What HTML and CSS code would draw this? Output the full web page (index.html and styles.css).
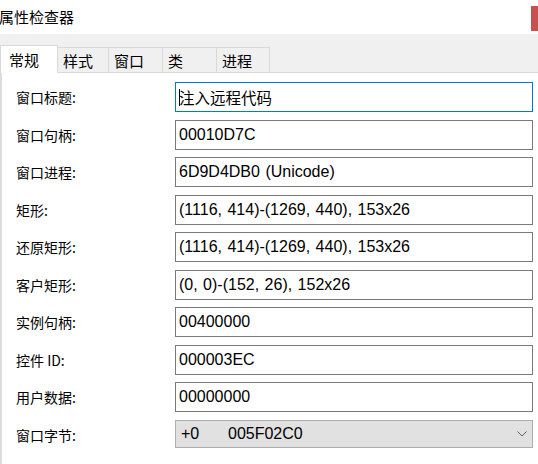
FILE: index.html
```html
<!DOCTYPE html>
<html lang="zh-CN">
<head>
<meta charset="utf-8">
<title>属性检查器</title>
<link rel="stylesheet" href="styles.css">
</head>
<body>
<div class="window">
  <div class="titlebar">
    <span class="title">属性检查器</span>
    <span class="close"></span>
  </div>
  <div class="tabstrip">
    <div class="tab active">常规</div>
    <div class="tab w52">样式</div>
    <div class="tab w55">窗口</div>
    <div class="tab w55">类</div>
    <div class="tab w54">进程</div>
  </div>
  <div class="panel">
    <div class="form">
      <div class="label">窗口标题:</div>
      <div class="field focus"><span class="caret"></span>注入远程代码</div>
      <div class="label">窗口句柄:</div>
      <div class="field">00010D7C</div>
      <div class="label">窗口进程:</div>
      <div class="field">6D9D4DB0 (Unicode)</div>
      <div class="label">矩形:</div>
      <div class="field">(1116, 414)-(1269, 440), 153x26</div>
      <div class="label">还原矩形:</div>
      <div class="field">(1116, 414)-(1269, 440), 153x26</div>
      <div class="label">客户矩形:</div>
      <div class="field">(0, 0)-(152, 26), 152x26</div>
      <div class="label">实例句柄:</div>
      <div class="field">00400000</div>
      <div class="label">控件 ID:</div>
      <div class="field">000003EC</div>
      <div class="label">用户数据:</div>
      <div class="field">00000000</div>
      <div class="label">窗口字节:</div>
      <div class="combo">
        <span class="offset">+0</span>
        <span class="value">005F02C0</span>
        <svg class="chev" width="10" height="6" viewBox="0 0 10 6"><path d="M0.5 0.5 L5 5 L9.5 0.5" fill="none" stroke="#606060" stroke-width="1"/></svg>
      </div>
    </div>
  </div>
</div>
</body>
</html>
```
FILE: styles.css
```css
html, body {
  margin: 0;
  padding: 0;
  background: #ffffff;
}
body {
  width: 538px;
  height: 464px;
  overflow: hidden;
  font-family: "Liberation Sans", "Noto Sans CJK SC", sans-serif;
  color: #000;
}
.window {
  display: flex;
  flex-direction: column;
  height: 464px;
}
.titlebar {
  height: 34px;
  display: flex;
  justify-content: space-between;
  align-items: flex-start;
}
.title {
  font-family: "Noto Sans CJK SC", sans-serif;
  font-size: 15px;
  line-height: 33px;
  margin-left: -1px;
}
.close {
  width: 7px;
  height: 25px;
  margin-top: 6px;
  background: #c75050;
}
.tabstrip {
  height: 39px;
  box-sizing: border-box;
  background: #f0f0f0;
  border-bottom: 1px solid #d9d9d9;
  display: flex;
  align-items: flex-end;
}
.tab {
  box-sizing: border-box;
  height: 26px;
  margin-bottom: -1px;
  margin-left: -1px;
  border: 1px solid #d9d9d9;
  background: #f0f0f0;
  font-family: "Noto Sans CJK SC", sans-serif;
  font-size: 15px;
  display: flex;
  align-items: center;
  padding-left: 5px;
}
.tab.active {
  margin-left: 0;
  width: 58px;
  height: 28px;
  background: #ffffff;
  border-bottom: none;
  padding-left: 8px;
  position: relative;
  z-index: 1;
}
.w52 { width: 52px; }
.w55 { width: 55px; }
.w54 { width: 54px; }
.panel {
  flex: 1;
  border-left: 2px solid #dcdcdc;
}
.form {
  display: grid;
  grid-template-columns: 173px 358px;
  grid-auto-rows: 30px;
  row-gap: 7.5px;
  padding-top: 9px;
}
.label {
  font-family: "Noto Sans CJK SC", sans-serif;
  font-size: 14px;
  padding-left: 14px;
  display: flex;
  align-items: center;
}
.field {
  box-sizing: border-box;
  height: 30px;
  border: 1px solid #7a7a7a;
  padding: 0 3px;
  font-size: 16px;
  word-spacing: 1px;
  display: flex;
  align-items: center;
  white-space: pre;
}
.field.focus {
  border-color: #0078d7;
  font-size: 15.5px;
}
.caret {
  display: inline-block;
  width: 1px;
  height: 17px;
  background: #000;
  margin-right: -1px;
}
.combo {
  box-sizing: border-box;
  height: 28px;
  border: 1px solid #adadad;
  background: #e1e1e1;
  display: flex;
  align-items: center;
  font-size: 16px;
  padding-left: 5px;
}
.offset {
  width: 47px;
}
.value {
  flex: 1;
}
.chev {
  margin-right: 5px;
}
```
